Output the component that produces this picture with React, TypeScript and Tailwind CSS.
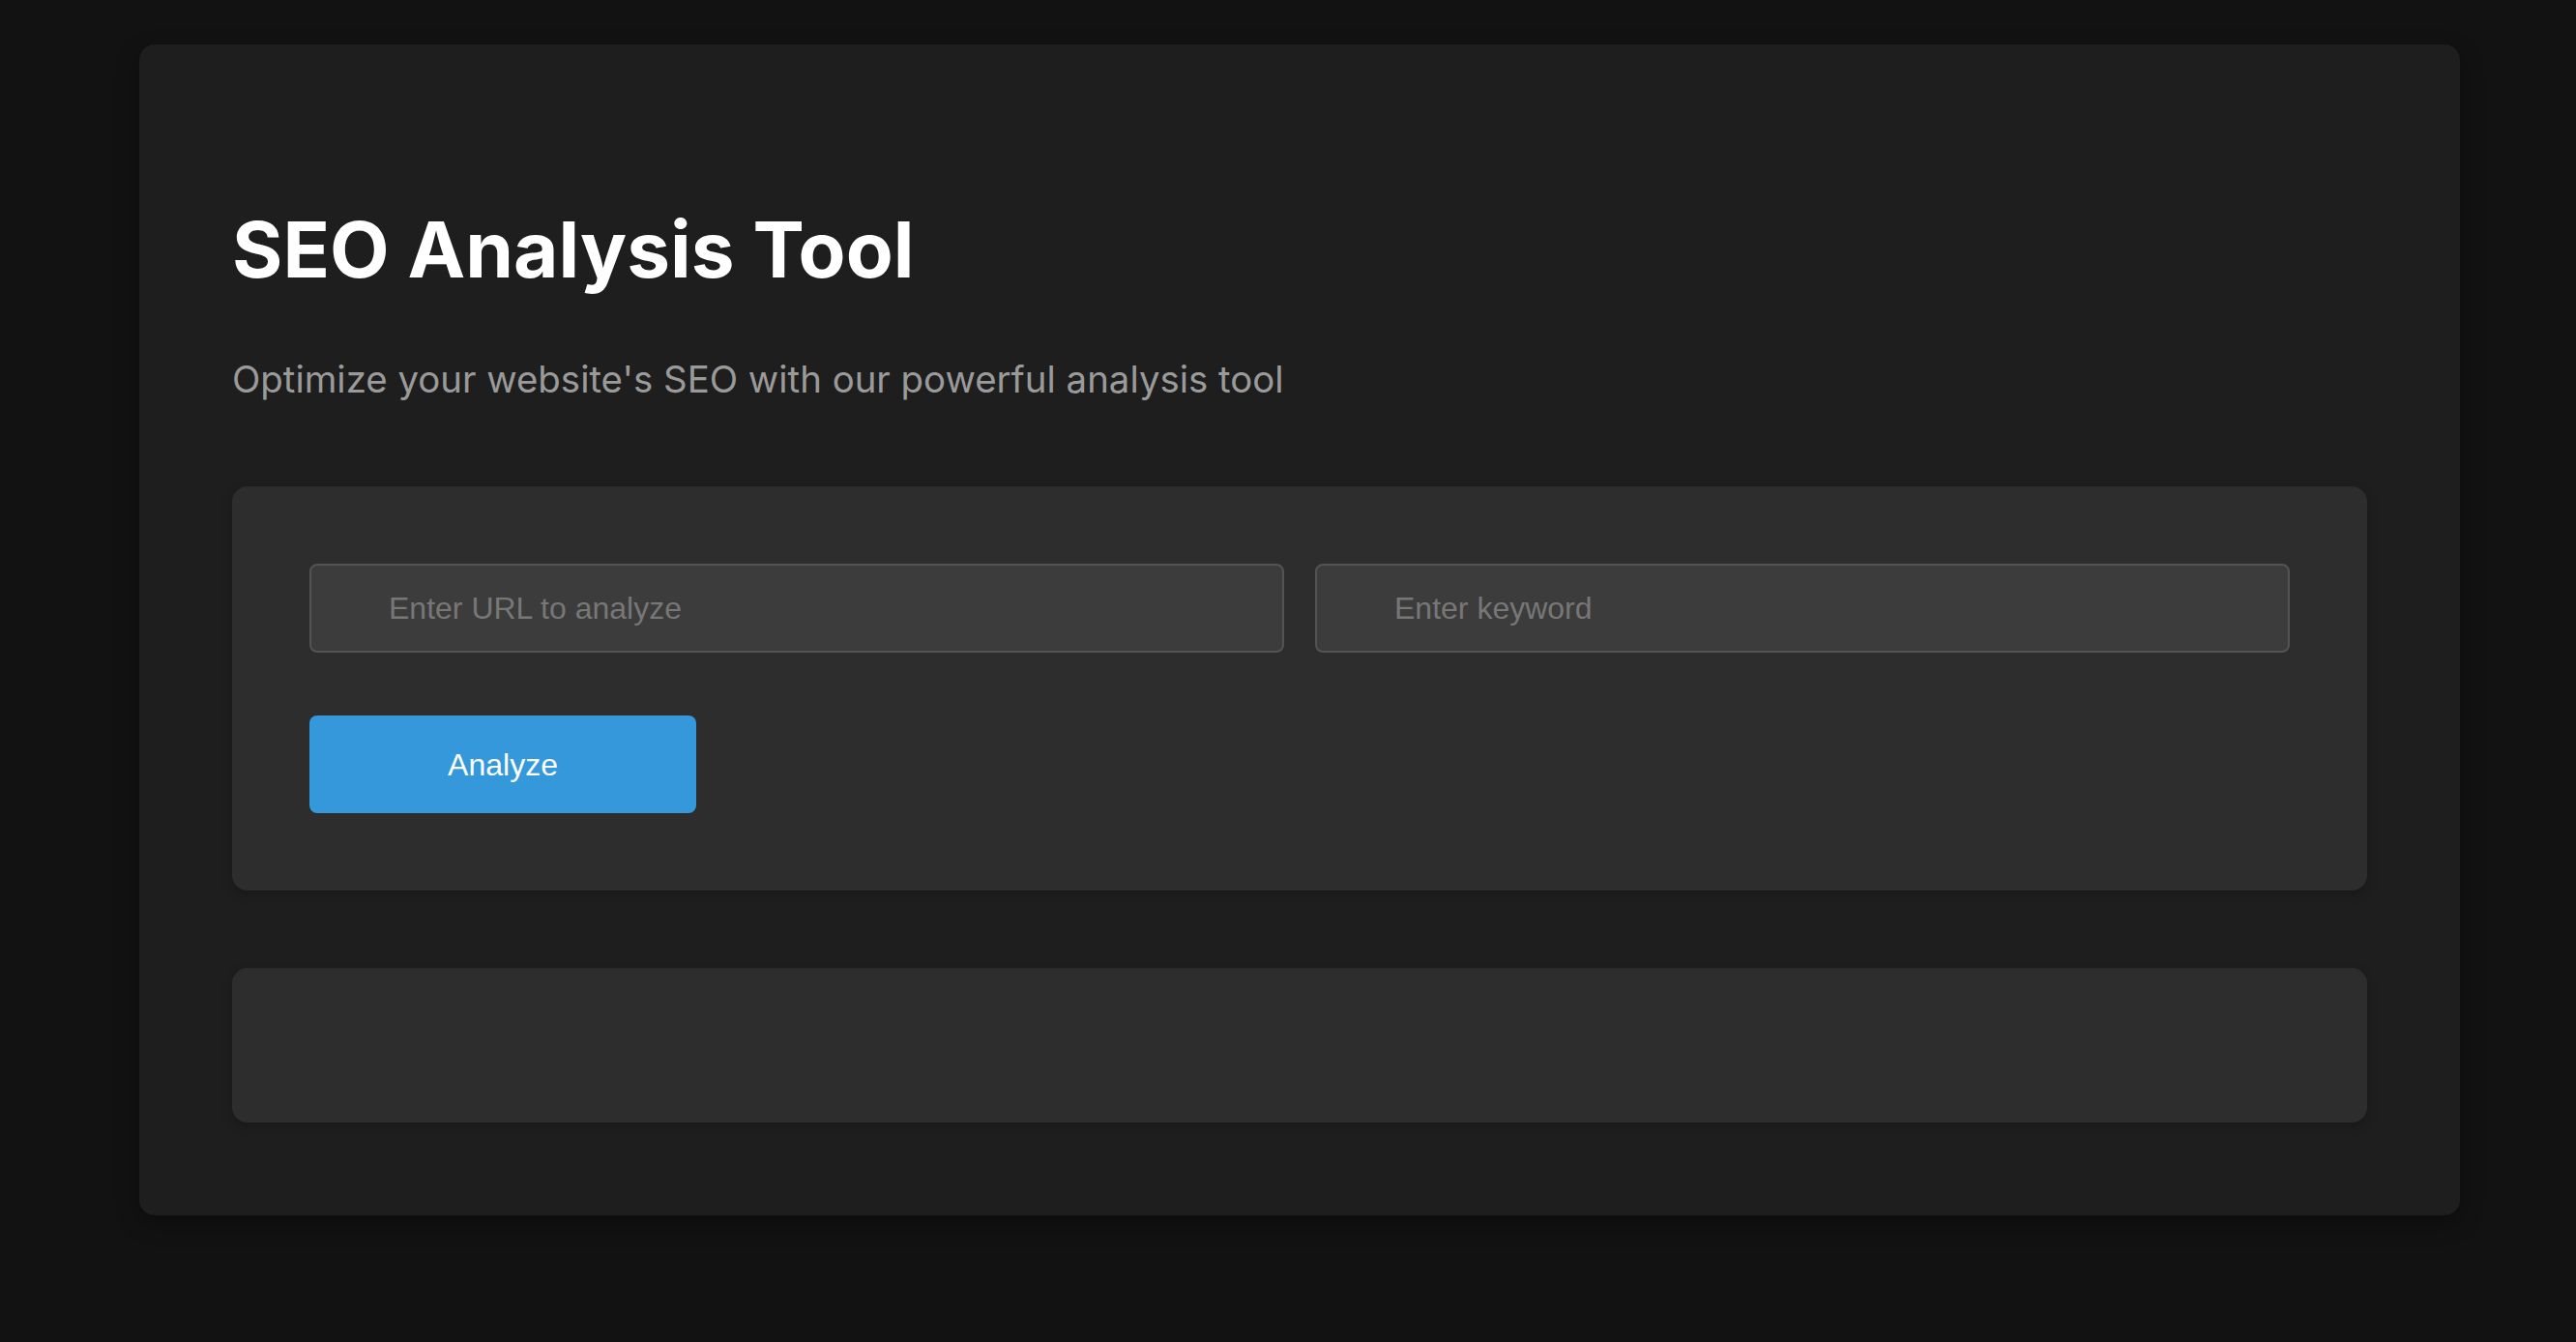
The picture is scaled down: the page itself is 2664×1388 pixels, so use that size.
import { useState } from "react";

export default function App() {
  const [url, setUrl] = useState("");
  const [keyword, setKeyword] = useState("");

  return (
    <div className="min-h-screen bg-[#121212] pt-[46px] pb-[131px]">
      <div className="ml-[144px] w-[2400px] rounded-[16px] bg-[#1e1e1e] p-[96px] shadow-[0_8px_24px_rgba(0,0,0,0.3)]">
        <h1 className="mt-[68px] font-['Inter',sans-serif] text-[80px] font-bold leading-[96px] text-white">
          SEO Analysis Tool
        </h1>
        <p className="mt-[63px] font-['Inter',sans-serif] text-[38.4px] leading-[46px] text-[#9a9a9a]">
          Optimize your website's SEO with our powerful analysis tool
        </p>

        <div className="mt-[88px] rounded-[16px] bg-[#2d2d2d] p-[80px] shadow-[0_4px_12px_rgba(0,0,0,0.2)]">
          <div className="grid grid-cols-2 gap-[32px]">
            <input
              value={url}
              onChange={(e) => setUrl(e.target.value)}
              placeholder="Enter URL to analyze"
              className="h-[92px] rounded-[8px] border-2 border-[#535353] bg-[#3c3c3c] pl-[80px] pr-[26px] font-['Liberation_Sans',Arial,sans-serif] text-[32px] text-white outline-none placeholder:text-[#777777]"
            />
            <input
              value={keyword}
              onChange={(e) => setKeyword(e.target.value)}
              placeholder="Enter keyword"
              className="h-[92px] rounded-[8px] border-2 border-[#535353] bg-[#3c3c3c] pl-[80px] pr-[26px] font-['Liberation_Sans',Arial,sans-serif] text-[32px] text-white outline-none placeholder:text-[#777777]"
            />
          </div>
          <button className="mt-[65px] flex h-[101px] w-[400px] items-center justify-center rounded-[8px] bg-[#3498db] font-['Liberation_Sans',Arial,sans-serif] text-[32px] text-white">
            Analyze
          </button>
        </div>

        <div className="mt-[80px] h-[160px] rounded-[16px] bg-[#2d2d2d] shadow-[0_4px_12px_rgba(0,0,0,0.2)]" />
      </div>
    </div>
  );
}
